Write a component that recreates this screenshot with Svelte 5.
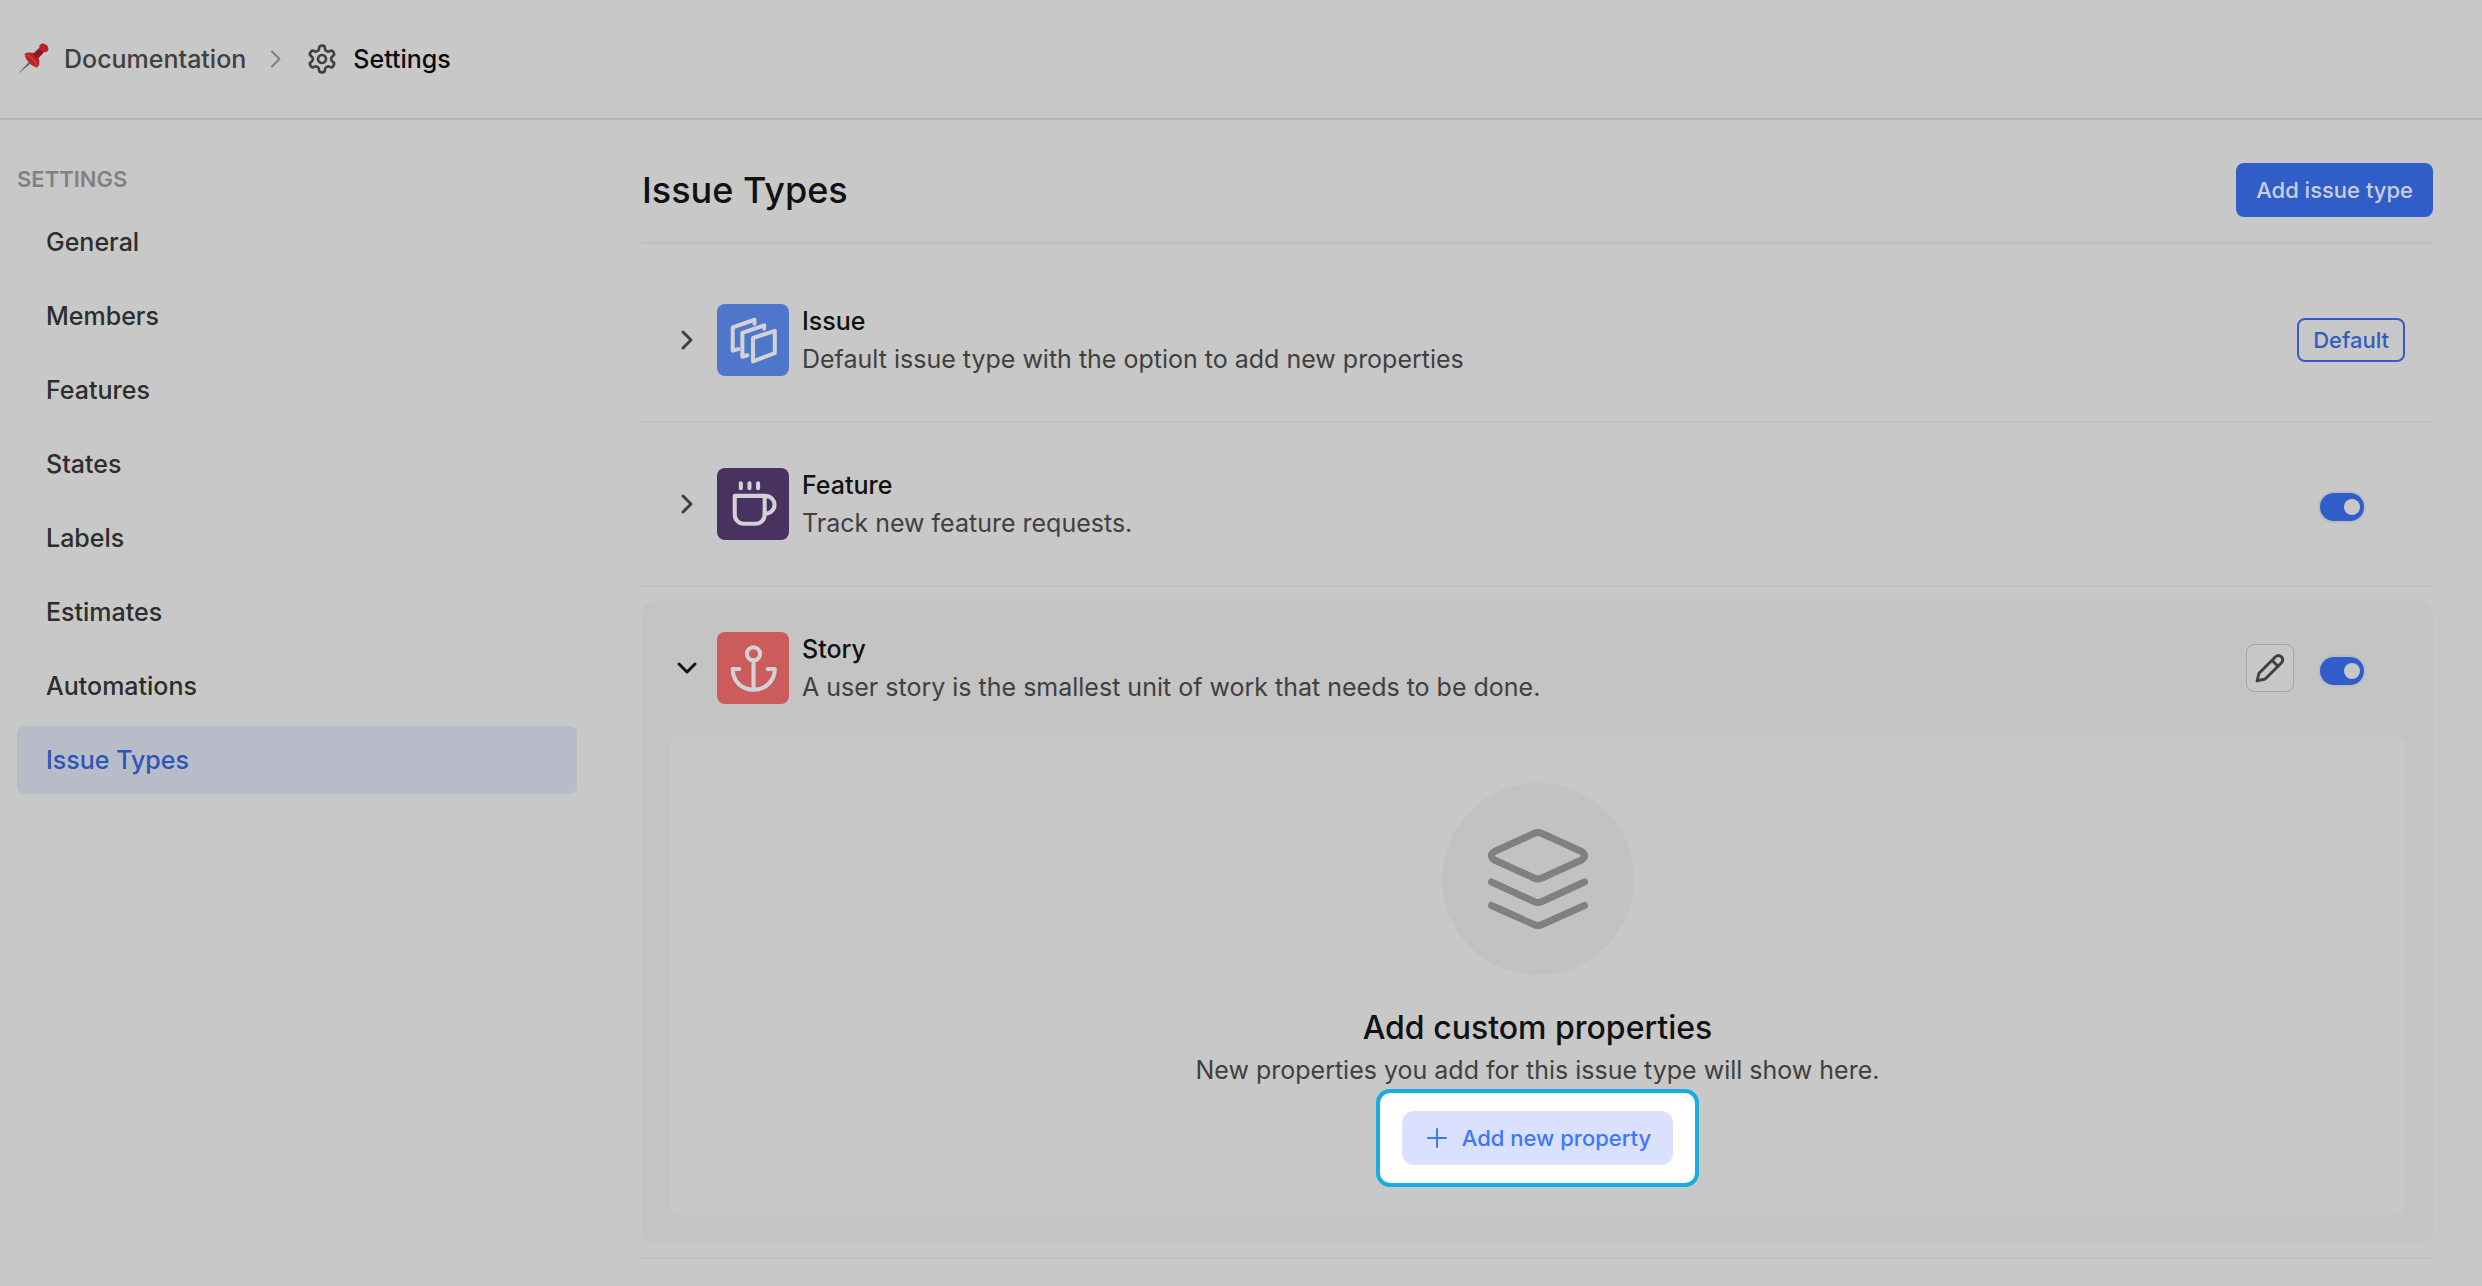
<script>
  const nav = ['General', 'Members', 'Features', 'States', 'Labels', 'Estimates', 'Automations', 'Issue Types'];

  let types = $state([
    { id: 'issue', name: 'Issue', text: 'Default issue type with the option to add new properties', isDefault: true, open: false, on: true },
    { id: 'feature', name: 'Feature', text: 'Track new feature requests.', isDefault: false, open: false, on: true },
    { id: 'story', name: 'Story', text: 'A user story is the smallest unit of work that needs to be done.', isDefault: false, open: true, on: true }
  ]);
</script>

<div class="page">
  <header class="topbar">
    <nav class="crumbs" aria-label="Breadcrumb">
      <a class="crumb" href="#documentation">
        <svg class="pin" viewBox="0 0 32 32" aria-hidden="true">
          <path d="M1 31 L14 16.500 L16 18.500 Z" fill="#56696d" />
          <path d="M7.500 11 C10 9 14 9.500 17 10 L22.500 5 C21.500 2 24 .5 26 .5 C29.500 1 31.500 3.500 31.500 6 C31 9 28.500 9.500 27 9 L21.500 15 C23 19 22.500 23 20 24.500 C15.500 23.500 8.500 18 7.500 11 Z" fill="#b5232b" />
          <path d="M17 10 C16 14 18 16 21.500 15 L27 9 C24.500 8.500 23 7 22.500 5 Z" fill="#94191f" />
          <path d="M8.500 12 C13 12 18 17 20 23.500" fill="none" stroke="#d03c44" stroke-width="1.500" />
        </svg>
        <span>Documentation</span>
      </a>
      <svg class="sep" viewBox="0 0 12 18" aria-hidden="true"><path d="M2 1.500 L9.500 9 L2 16.500" /></svg>
      <span class="crumb current" aria-current="page">
        <svg class="gear" viewBox="0 0 24 24" aria-hidden="true">
          <path d="M12.220 2h-.44a2 2 0 0 0-2 2v.18a2 2 0 0 1-1 1.730l-.43.25a2 2 0 0 1-2 0l-.15-.08a2 2 0 0 0-2.730.730l-.22.38a2 2 0 0 0 .73 2.730l.15.1a2 2 0 0 1 1 1.720v.51a2 2 0 0 1-1 1.740l-.15.09a2 2 0 0 0-.73 2.730l.22.38a2 2 0 0 0 2.730.730l.15-.08a2 2 0 0 1 2 0l.43.25a2 2 0 0 1 1 1.730V20a2 2 0 0 0 2 2h.44a2 2 0 0 0 2-2v-.18a2 2 0 0 1 1-1.730l.43-.25a2 2 0 0 1 2 0l.15.08a2 2 0 0 0 2.730-.73l.22-.39a2 2 0 0 0-.73-2.730l-.15-.08a2 2 0 0 1-1-1.740v-.5a2 2 0 0 1 1-1.740l.15-.09a2 2 0 0 0 .73-2.730l-.22-.38a2 2 0 0 0-2.730-.73l-.15.08a2 2 0 0 1-2 0l-.43-.25a2 2 0 0 1-1-1.730V4a2 2 0 0 0-2-2z" />
          <circle cx="12" cy="12" r="3" />
        </svg>
        <span>Settings</span>
      </span>
    </nav>
  </header>

  <div class="body">
    <aside class="sidebar">
      <h2 class="side-title">SETTINGS</h2>
      <nav class="side-nav" aria-label="Settings">
        {#each nav as item}
          <a class="side-link" class:active={item === 'Issue Types'} href="#{item.toLowerCase().replace(' ', '-')}">{item}</a>
        {/each}
      </nav>
    </aside>

    <main class="main">
      <div class="head">
        <h1>Issue Types</h1>
        <button class="primary" type="button">Add issue type</button>
      </div>

      <ul class="list">
        {#each types as type (type.id)}
          <li class="item">
            <section class="card" class:open={type.open}>
              <div class="row">
                <button class="toggle-open" type="button" aria-expanded={type.open} aria-label="Toggle {type.name}" onclick={() => (type.open = !type.open)}>
                  <svg viewBox="0 0 24 24" aria-hidden="true">
                    {#if type.open}
                      <path d="M4 8 L12 16 L20 8" />
                    {:else}
                      <path d="M8 4 L16 12 L8 20" />
                    {/if}
                  </svg>
                </button>
                <span class="tile {type.id}">
                  <svg viewBox="0 0 71 71" aria-hidden="true">
                    {#if type.id === 'issue'}
                      <path d="M35.500 33.500 L57 26.500 V48.500 L35.500 56.500 Z" />
                      <path d="M46.500 24.500 V21 L25 28.500 V52 L30 50.500" />
                      <path d="M37 19.500 V15.500 L15.500 23 V46 L21 44.500" />
                    {:else if type.id === 'feature'}
                      <path d="M17.500 27.500 H47 V46 a9 9 0 0 1 -9 9 H26.500 a9 9 0 0 1 -9 -9 Z" />
                      <path d="M47 27.500 C60 27.500 60 45 47 45" />
                      <path d="M23.500 15 V20 M32 15 V20 M40.500 15 V20" />
                    {:else}
                      <circle cx="36" cy="21.500" r="6.500" />
                      <path d="M36 28 V57 M22 36.500 H15.500 C15.500 48 24 57 36 57 C48 57 57 48 57 36.500 H50" />
                    {/if}
                  </svg>
                </span>
                <div class="label">
                  <h3>{type.name}</h3>
                  <p>{type.text}</p>
                </div>
                {#if type.isDefault}
                  <span class="badge">Default</span>
                {:else}
                  <div class="actions">
                    {#if type.open}
                      <button class="edit" type="button" aria-label="Edit {type.name}">
                        <svg viewBox="0 0 48 48" aria-hidden="true">
                          <path d="M10.500 37.500 L12.500 29.500 L29.500 12.500 C34 8.500 39.500 14 36 18.500 L19 35.500 Z M26 16 L32.500 22.500" />
                        </svg>
                      </button>
                    {/if}
                    <label class="switch">
                      <input type="checkbox" role="switch" aria-label="Enable {type.name}" bind:checked={type.on} />
                    </label>
                  </div>
                {/if}
              </div>

              {#if type.open}
                <div class="empty">
                  <div class="disc">
                    <svg viewBox="0 0 100 100" aria-hidden="true">
                      <path d="M46 4.500 Q50 2.500 54 4.500 L93.500 22.500 Q100 26.500 93.500 31 L54 49 Q50 51 46 49 L6.500 31 Q0 26.500 6.500 22.500 Z" />
                      <path d="M3.500 53 L46 72.500 Q50 74.500 54 72.500 L96.500 53" />
                      <path d="M3.500 76.500 L46 95.500 Q50 97.500 54 95.500 L96.500 76.500" />
                    </svg>
                  </div>
                  <h4>Add custom properties</h4>
                  <p>New properties you add for this issue type will show here.</p>
                  <div class="spotlight">
                    <button class="add" type="button">
                      <svg viewBox="0 0 20 20" aria-hidden="true"><path d="M10 1 V19 M1 10 H19" /></svg>
                      <span>Add new property</span>
                    </button>
                  </div>
                </div>
              {/if}
            </section>
          </li>
        {/each}
      </ul>
    </main>
  </div>
</div>

<style>
  :global(body) {
    margin: 0;
    background: #c8c8c8;
  }

  .page {
    box-sizing: border-box;
    min-height: 100vh;
    background: #c8c8c8;
    color: #111;
    font-family: Inter, 'Liberation Sans', sans-serif;
    font-size: 25px;
    line-height: 38px;
  }

  .page :where(h1, h2, h3, h4, p, ul) {
    margin: 0;
    padding: 0;
    font-weight: 500;
  }

  button {
    font: inherit;
    border: 0;
    padding: 0;
    background: none;
    cursor: pointer;
  }

  svg {
    display: block;
    flex: none;
    fill: none;
    stroke: currentColor;
    stroke-linecap: round;
    stroke-linejoin: round;
  }

  a {
    color: inherit;
    text-decoration: none;
  }

  .topbar {
    padding: 40px 17px;
    border-bottom: 2px solid #b4b4b4;
  }

  .crumbs {
    display: flex;
    align-items: center;
    gap: 24px;
    font-weight: 500;
  }

  .crumb {
    display: flex;
    align-items: center;
    gap: 15px;
    color: #404040;
  }

  .current {
    color: #0c0c0c;
  }

  .pin {
    width: 32px;
    height: 32px;
    stroke: none;
  }

  .sep {
    width: 12px;
    height: 18px;
    color: #808080;
    stroke-width: 2;
  }

  .gear {
    width: 32px;
    height: 32px;
    color: #404040;
    stroke-width: 2;
  }

  .body {
    display: flex;
    gap: 65px;
    padding: 0 49px 0 17px;
  }

  .sidebar {
    flex: 0 0 560px;
    padding-top: 40px;
  }

  .page .side-title {
    color: #828282;
    font-size: 22px;
    font-weight: 600;
  }

  .side-nav {
    display: flex;
    flex-direction: column;
    gap: 6px;
    padding-top: 10px;
  }

  .side-link {
    padding: 15px 29px 15px 29px;
    border-radius: 8px;
    color: #2d2d2d;
    font-weight: 500;
  }

  .side-link.active {
    background: #b8bcc9;
    color: #2d55b8;
  }

  .main {
    flex: 1;
    min-width: 0;
  }

  .head {
    display: flex;
    align-items: center;
    justify-content: space-between;
    padding: 43px 0 25px;
    border-bottom: 2px solid #c0c0c0;
  }

  h1 {
    font-size: 36px;
  }

  .primary {
    padding: 8px 20px;
    border-radius: 8px;
    background: #315dc9;
    color: #c9cfdf;
    font-size: 22px;
    font-weight: 500;
  }

  .list {
    list-style: none;
    padding-top: 15px;
  }

  .item {
    padding: 14px 0;
    border-bottom: 2px solid #c0c0c0;
  }

  .card {
    border-radius: 12px;
  }

  .card.open {
    padding-bottom: 28px;
    background: #c4c4c4;
  }

  .row {
    display: flex;
    align-items: center;
    padding: 29px 28px 29px 33px;
  }

  .toggle-open {
    color: #404040;
  }

  .open .toggle-open {
    color: #111;
  }

  .toggle-open svg {
    width: 24px;
    height: 24px;
    stroke-width: 3;
  }

  .tile {
    margin: 0 13px 0 18px;
    border-radius: 8px;
    color: #d2d2d6;
  }

  .tile svg {
    width: 72px;
    height: 72px;
    stroke-width: 4;
  }

  .issue {
    background: #4e76cb;
  }

  .feature {
    background: #493160;
  }

  .story {
    background: #cb5c5b;
  }

  .label {
    flex: 1;
    min-width: 0;
  }

  h3 {
    font-size: 25px;
  }

  .page p {
    color: #404040;
    font-weight: 400;
  }

  .badge {
    padding: 1px 14px;
    border: 2px solid #315dc0;
    border-radius: 8px;
    color: #315dc0;
    font-size: 22px;
    font-weight: 500;
  }

  .actions {
    display: flex;
    align-items: center;
    gap: 26px;
    padding-right: 41px;
  }

  .edit {
    box-sizing: border-box;
    border: 1px solid #a6a6a6;
    border-radius: 8px;
    background: #c8c8c8;
    color: #404040;
  }

  .edit svg {
    width: 46px;
    height: 46px;
    stroke-width: 3;
  }

  .switch {
    display: flex;
    padding-top: 6px;
  }

  .switch input {
    appearance: none;
    display: flex;
    align-items: center;
    box-sizing: border-box;
    width: 44px;
    height: 28px;
    margin: 0;
    padding: 0 4px;
    border-radius: 14px;
    background: #8c8c8c;
    box-shadow: 0 0 0 2px #b9bcc4;
    cursor: pointer;
  }

  .switch input::before {
    content: '';
    width: 16px;
    height: 16px;
    border-radius: 50%;
    background: #c8c8c8;
  }

  .switch input:checked {
    justify-content: flex-end;
    background: #315dc9;
  }

  .empty {
    display: flex;
    flex-direction: column;
    align-items: center;
    margin: 0 28px;
    padding: 48px 28px 28px;
    border-radius: 12px;
    background: #c8c8c8;
    text-align: center;
  }

  .disc {
    display: grid;
    place-items: center;
    width: 192px;
    height: 192px;
    margin-bottom: 30px;
    border-radius: 50%;
    background: #c2c2c2;
    color: #808080;
  }

  .disc svg {
    width: 100px;
    height: 100px;
    stroke-width: 7;
  }

  h4 {
    font-size: 32px;
    line-height: 46px;
  }

  .spotlight {
    padding: 18px 22px;
    border: 4px solid #16ade2;
    border-radius: 14px;
    background: #fff;
  }

  .add {
    display: flex;
    align-items: center;
    gap: 15px;
    padding: 8px 22px 8px 25px;
    border-radius: 12px;
    background: #d9e1ff;
    color: #3f76ff;
    font-size: 22px;
    font-weight: 500;
  }

  .add svg {
    width: 20px;
    height: 20px;
    stroke-width: 2;
  }
</style>
